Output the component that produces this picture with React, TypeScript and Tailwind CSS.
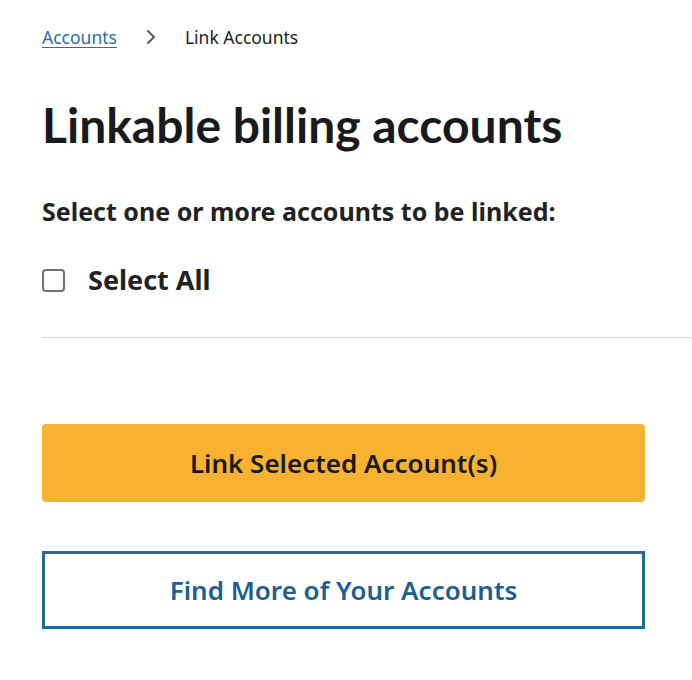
import React from "react";

export default function App() {
  return (
    <div className="min-h-[680px] w-[692px] bg-white pl-[42px] pt-[26px]" style={{ fontFamily: '"Noto Sans", "Open Sans", sans-serif' }}>
      <nav className="flex items-center text-[17.5px] leading-[22px]">
        <a href="#" className="text-[#2a6ea6] underline underline-offset-[3px]">Accounts</a>
        <svg className="ml-[29px] mr-[29px]" width="10" height="16" viewBox="0 0 10 16" fill="none">
          <path d="M2 2l6 6-6 6" stroke="#5a5a5a" strokeWidth="2" strokeLinecap="round" strokeLinejoin="round" />
        </svg>
        <span className="text-[#222]">Link Accounts</span>
      </nav>
      <h1 className="mt-[48px] text-[48px] font-bold leading-[58px] text-[#1a1a1a]" style={{ fontFamily: 'Lato, "Noto Sans", sans-serif' }}>
        Linkable billing accounts
      </h1>
      <p className="mt-[41px] text-[25px] font-bold leading-[32px] text-[#222]">Select one or more accounts to be linked:</p>
      <label className="mt-[37px] flex h-[32px] items-center">
        <span className="block h-[23px] w-[23px] rounded-[4px] border-2 border-[#707070] bg-white" />
        <span className="ml-[23px] text-[27px] font-bold leading-[32px] text-[#222]">Select All</span>
      </label>
      <div className="mt-[41px] h-px bg-[#d9d9d9]" />
      <div className="w-[603px]">
        <button className="mt-[86px] flex h-[78px] w-full items-center justify-center rounded-[4px] bg-[#f8b22f] text-[26px] font-semibold text-[#1a1a1a]">
          Link Selected Account(s)
        </button>
        <button className="mt-[49px] flex h-[78px] w-full items-center justify-center border-[3px] border-[#1c6aa0] bg-white text-[26px] font-semibold text-[#1c5f91]">
          Find More of Your Accounts
        </button>
      </div>
    </div>
  );
}
